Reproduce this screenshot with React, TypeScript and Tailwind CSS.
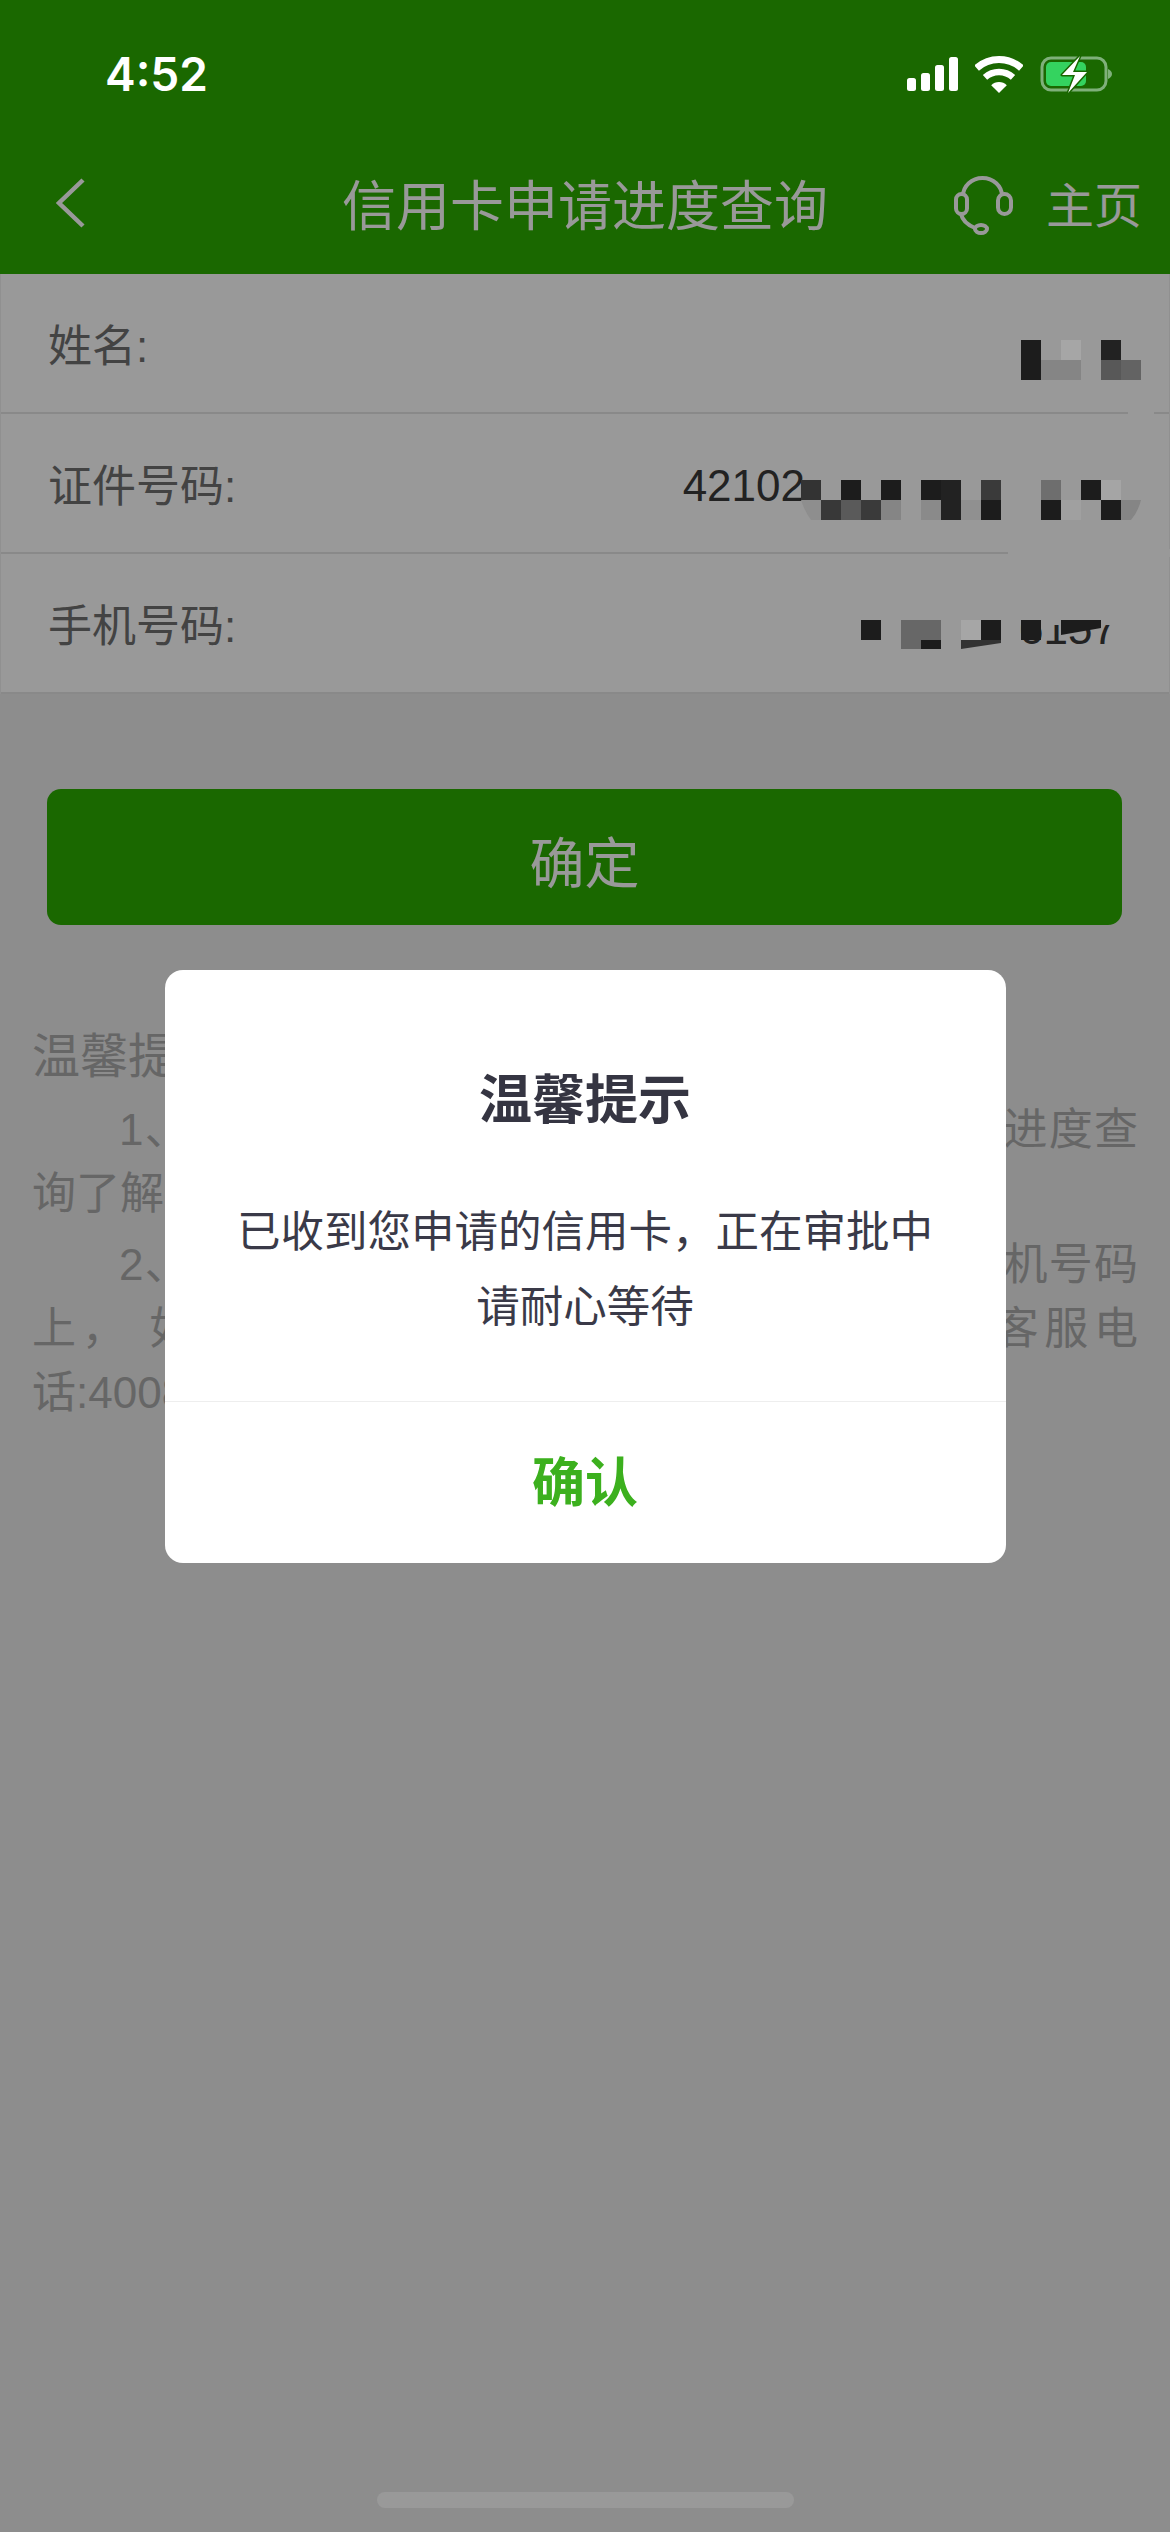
const FONT = 'font-["Liberation_Sans","Noto_Sans_CJK_SC",sans-serif]';

// mosaic cells over the personal data: [x, y, colour], y is relative to the list top (274)
const mosaic: [number, number, string][] = [
    [1020, 66, '#1c1c1c'], [1020, 86, '#1c1c1c'], [1040, 86, '#858585'], [1060, 66, '#a6a6a6'], [1060, 86, '#858585'],
    [1100, 66, '#222222'], [1100, 86, '#585858'], [1120, 86, '#636363'],
    [800, 206, '#333333'], [840, 206, '#1c1c1c'], [880, 206, '#1c1c1c'], [920, 206, '#1c1c1c'], [940, 206, '#222222'],
    [980, 206, '#3a3a3a'], [1040, 206, '#6e6e6e'], [1080, 206, '#1c1c1c'], [1100, 206, '#a5a5a5'],
    [820, 226, '#383838'], [840, 226, '#5a5a5a'], [860, 226, '#3a3a3a'], [880, 226, '#858585'], [920, 226, '#8a8a8a'],
    [940, 226, '#222222'], [960, 226, '#909090'], [980, 226, '#1c1c1c'], [1040, 226, '#1c1c1c'], [1060, 226, '#a0a0a0'],
    [1100, 226, '#1c1c1c'],
    [860, 346, '#1c1c1c'], [900, 346, '#676767'], [920, 346, '#676767'], [960, 346, '#a6a6a6'], [980, 346, '#1c1c1c'],
    [1020, 346, '#1c1c1c'],
];

// sits above the dim layer, so these are the colours as photographed
const Redaction = () => (
    <svg className="absolute left-0 top-0 z-20 h-[420px] w-[1170px]" viewBox="0 0 1170 420">
        <rect x="1127" y="135" width="26" height="8" fill="#999999" />
        <rect x="1007" y="275" width="163" height="8" fill="#999999" />
        <rect x="1010" y="330" width="110" height="21" fill="#999999" />
        {mosaic.map(([x, y, fill]) => (
            <rect key={`${x}-${y}`} x={x} y={y} width="20" height="20" fill={fill} />
        ))}
        <path d="M800 226h20v20h-10q-6-8-10-20z" fill="#8e8e8e" />
        <path d="M1120 226h20q-3 12-10 20h-10z" fill="#858585" />
        <rect x="900" y="366" width="40" height="9" fill="#676767" />
        <rect x="920" y="366" width="20" height="9" fill="#1c1c1c" />
        <path d="M960 366h40v3l-40 6z" fill="#333333" />
        <path d="M1060 346h40v8l-40 7z" fill="#1c1c1c" />
    </svg>
);

const Row = ({ label, value, valueClass }: { label: string; value?: string; valueClass?: string }) => (
    <div className="flex h-[140px] items-center justify-between border-b-2 border-[#e5e5e5] pl-[47px] pt-[5px]">
        <span className="pt-[3px] text-[#707070]">{label}</span>
        {value && <span className={`text-[#393939] ${valueClass}`}>{value}</span>}
    </div>
);

const StatusBar = () => (
    <div className="relative z-20 flex h-[148px] items-center justify-between pl-[105px] pr-[58px]">
        <span className="font-['Inter',sans-serif] text-[46px] font-semibold text-white">4:52</span>
        <div className="flex items-center gap-[17px]">
            <svg className="h-[34px] w-[51px]" viewBox="0 0 51 34" fill="#ffffff">
                <rect x="0" y="21" width="9" height="13" rx="2.5" />
                <rect x="14" y="16" width="9" height="18" rx="2.5" />
                <rect x="28" y="8" width="9" height="26" rx="2.5" />
                <rect x="42" y="0" width="9" height="34" rx="2.5" />
            </svg>
            <svg className="h-[37px] w-[48px]" viewBox="0 0 48 37" fill="none">
                <path d="M1.6 12.1A33.5 33.5 0 0 1 46.4 12.1" stroke="#ffffff" strokeWidth="7" />
                <path d="M10 21.4A21 21 0 0 1 38 21.4" stroke="#ffffff" strokeWidth="6.5" />
                <path d="M24 37L16.2 29.2A11 11 0 0 1 31.8 29.2Z" fill="#ffffff" />
            </svg>
            <svg className="h-[38px] w-[72px]" viewBox="0 0 72 38" fill="none">
                <rect x="2" y="3" width="64" height="32" rx="9" stroke="#7fb07a" strokeWidth="3" />
                <path d="M68 14q4 2 4 5t-4 5z" fill="#7fb07a" />
                <rect x="6" y="7" width="40" height="24" rx="5" fill="#34d35f" />
                <path d="M40 1L22 20H35L28 38L47 17H33Z" fill="#ffffff" stroke="#196600" strokeWidth="3" paintOrder="stroke" strokeLinejoin="round" />
            </svg>
        </div>
    </div>
);

const NavBar = () => (
    <div className="grid h-[126px] grid-cols-[1fr_auto_1fr] items-center pb-[10px] text-[54px] leading-[80px] text-white">
        <div className="pl-[56px]">
            <svg className="mb-[6px] block h-[50px] w-[30px]" viewBox="0 0 30 50" fill="none" stroke="#ffffff" strokeWidth="4.5">
                <path d="M27 2L3 25L27 48" />
            </svg>
        </div>
        <span className="pt-[2px]">信用卡申请进度查询</span>
        <div className="flex items-center justify-end gap-[33px] pr-[28px]">
            <svg className="h-[60px] w-[60px]" viewBox="0 0 60 60" fill="none" stroke="#ffffff" strokeWidth="4">
                <path d="M10 20A19.5 18 0 0 1 49 20" />
                <rect x="3" y="18" width="11" height="20" rx="5.5" />
                <rect x="45" y="18" width="13" height="20" rx="6.5" />
                <path d="M8 38Q10 47 22 52" />
                <ellipse cx="28" cy="53" rx="6" ry="4" />
            </svg>
            <span className="pt-[2px] text-[48px]">主页</span>
        </div>
    </div>
);

export default function App() {
    return (
        <div className={`relative h-[2532px] w-[1170px] overflow-hidden bg-[#ebebeb] ${FONT}`}>
            <header className="bg-[#2cad00]">
                <StatusBar />
                <NavBar />
            </header>

            <div className="relative border-x border-[#f0f0f0] bg-white text-[44px] leading-[60px]">
                <Row label="姓名:" />
                <Row label="证件号码:" value="42102" valueClass="pr-[364px]" />
                <Row label="手机号码:" value="6157" valueClass="pr-[52px] pt-[6px]" />
                <Redaction />
            </div>

            <button className="mx-[47px] mt-[95px] flex h-[136px] w-[1075px] items-center justify-center rounded-[14px] bg-[#2cad00] pt-[14px] text-[55px] text-white">
                确定
            </button>

            <div className="mt-[97px] px-[32px] text-[44px] leading-[64px] text-[#aaaaaa]">
                <p className="text-[48px] leading-[70px]">温馨提示</p>
                <p className="mt-[6px] indent-[87px] text-justify">1、信用卡申请提交后，您可随时通过信用卡进度查询了解最新审批情况。</p>
                <p className="mt-[7px] indent-[87px] text-justify">2、审批结果将以短信形式发送到您预留的手机号码上， 如有任何疑问可以拨打我行信用卡中心客服电话:4008888888。</p>
            </div>

            {/* dim layer and dialog */}
            <div className="absolute inset-0 z-10 flex items-center justify-center bg-black/40">
                <div className="w-[841px] rounded-[18px] bg-white text-center">
                    <div className="h-[431px] pt-[98px]">
                        <p className="text-[53px] font-bold leading-[66px] text-[#353542]">温馨提示</p>
                        <p className="mt-[61px] text-[43.5px] leading-[75px] text-[#3a3a48]">
                            已收到您申请的信用卡，正在审批中
                            <br />
                            请耐心等待
                        </p>
                    </div>
                    <div className="flex h-[162px] items-center justify-center border-t border-[#eeeeee] pt-[3px] text-[53px] font-bold text-[#3cb01e]">
                        确认
                    </div>
                </div>
            </div>

            <div className="absolute bottom-[24px] left-[377px] z-20 h-[16px] w-[417px] rounded-full bg-[#999999]" />
        </div>
    );
}
